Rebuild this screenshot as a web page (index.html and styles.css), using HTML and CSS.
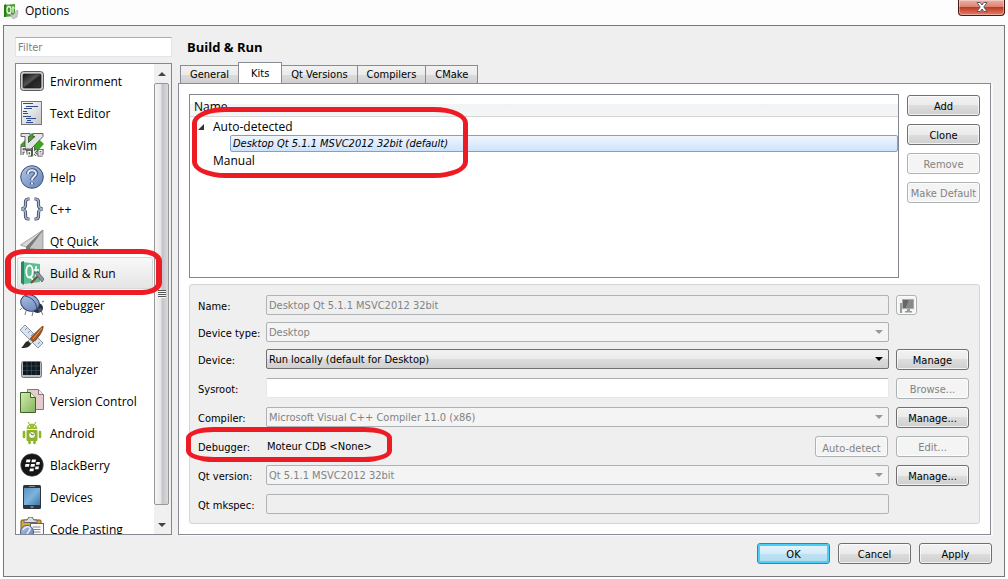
FILE: index.html
```html
<!DOCTYPE html>
<html lang="en">
<head>
    <meta charset="UTF-8">
    <meta name="viewport" content="width=device-width, initial-scale=1.0">
    <title>Options</title>
    <link rel="stylesheet" href="styles.css">
</head>
<body>
    <svg class="defs" width="0" height="0" aria-hidden="true">
        <defs>
            <linearGradient id="dark" x1="0" y1="0" x2="1" y2="1"><stop offset="0" stop-color="#111"/><stop offset=".45" stop-color="#555"/><stop offset=".55" stop-color="#222"/><stop offset="1" stop-color="#333"/></linearGradient>
            <linearGradient id="silver" x1="0" y1="0" x2="1" y2="1"><stop offset="0" stop-color="#fff"/><stop offset="1" stop-color="#c4c6c8"/></linearGradient>
            <linearGradient id="blue" x1="0" y1="0" x2="1" y2="1"><stop offset="0" stop-color="#b4c6e4"/><stop offset="1" stop-color="#6482b8"/></linearGradient>
            <linearGradient id="green" x1="0" y1="0" x2="1" y2="1"><stop offset="0" stop-color="#d4ecae"/><stop offset="1" stop-color="#82b45c"/></linearGradient>
            <linearGradient id="screen" x1="0" y1="0" x2="1" y2="1"><stop offset="0" stop-color="#5a94c4"/><stop offset=".5" stop-color="#7db4dc"/><stop offset="1" stop-color="#3a78ac"/></linearGradient>
        </defs>
    </svg>

    <div class="titlebar">
        <svg class="app-icon" viewBox="0 0 16 16">
            <path d="M1 2l11-1v12L1 14z" fill="#45a02c"/>
            <path d="M1 2l2-1v13l-2 0z" fill="#2b7a18"/>
            <ellipse cx="6" cy="7" rx="2" ry="3.5" fill="none" stroke="#e8f6e0" stroke-width="1.3"/>
            <path d="M6 9l2 3M10 3v7M9 5h3" stroke="#e8f6e0" stroke-width="1.2"/>
            <path d="M7 11l3 1 4-5 1 1-1 6-4 2z" fill="#c8cccc" stroke="#8c9292" stroke-width=".5"/>
        </svg>
        <span class="title">Options</span>
        <button class="close" aria-label="Close">
            <svg viewBox="0 0 12 10"><path d="M1 .5h3.2L6 3 7.8.5H11L7.8 5 11 9.5H7.8L6 7 4.2 9.500H1L4.200 5z" fill="#fff" stroke="#5a5a66"/></svg>
        </button>
    </div>

    <div class="dialog">
        <div class="content">
            <div class="sidebar">
                <input class="filter" type="text" placeholder="Filter" aria-label="Filter">
                <div class="list">
                    <ul class="items">
                        <li>
                            <svg viewBox="0 0 24 24"><rect x=".5" y="2.5" width="23" height="19" rx="3" fill="#c8c8c8" stroke="#5c5c5c"/><rect x="3" y="5" width="18" height="14" rx="1" fill="url(#dark)" stroke="#111" stroke-width=".6"/></svg>
                            Environment
                        </li>
                        <li>
                            <svg viewBox="0 0 24 24"><rect x="1.5" y=".5" width="20" height="23" fill="url(#silver)" stroke="#777"/><path d="M3 2.500h10M6 5.500h12M4 7.500h8M3 10.500h4M3 12.500h5M3 15.500h8M6 17.500h10M7 19.500h4M6 21.500h7" stroke="#2c4c8c"/></svg>
                            Text Editor
                        </li>
                        <li>
                            <svg viewBox="0 0 24 24"><path d="M12 0l12 11-12 13L0 12z" fill="#3aa51e"/><path d="M1 .5h9v3H8.500v6L15 3.500h-2v-3h10v3L11 16H5V3.500H1z" fill="#e4e6e4" stroke="#444" stroke-width=".8"/><path d="M2 22v-7.500h3.500M2 18h3M8 21.500v-3h2.500V22H8M13.500 14v8M16.500 17l-2.500 2.500 2.500 2.500M22.500 22h-3.500v-4.500h3v2.500h-3" fill="none" stroke="#3c3c3c" stroke-width="3"/><path d="M2 22v-7.500h3.500M2 18h3M8 21.500v-3h2.500V22H8M13.500 14v8M16.500 17l-2.500 2.500 2.500 2.500M22.500 22h-3.500v-4.500h3v2.500h-3" fill="none" stroke="#f4f4f4" stroke-width="1.300"/></svg>
                            FakeVim
                        </li>
                        <li>
                            <svg viewBox="0 0 24 24"><circle cx="12" cy="12" r="11.300" fill="url(#blue)" stroke="#3c5078"/><path d="M8 9c0-5 8-5 8-.5 0 3-4 3-4 6.500M12 17.500v2" fill="none" stroke="#3e537c" stroke-width="4"/><path d="M8 9c0-5 8-5 8-.5 0 3-4 3-4 6.500M12 17.500v2" fill="none" stroke="#e4eaf6" stroke-width="2"/></svg>
                            Help
                        </li>
                        <li>
                            <svg viewBox="0 0 24 24"><path d="M9.500 2H8C5 2 5.500 5 5.500 8S4 11.500 1.500 12C4 12.500 5.500 13 5.500 16S5 22 8 22h1.500M14.500 2H16c3 0 2.500 3 2.500 6s1.500 3.500 4 4c-2.500.5-4 1-4 4s.5 6-2.500 6h-1.500" fill="none" stroke="#3c4860" stroke-width="3.200"/><path d="M9.500 2H8C5 2 5.500 5 5.500 8S4 11.500 1.500 12C4 12.500 5.500 13 5.500 16S5 22 8 22h1.500M14.500 2H16c3 0 2.500 3 2.500 6s1.500 3.500 4 4c-2.500.5-4 1-4 4s.5 6-2.500 6h-1.500" fill="none" stroke="#a9b8d0" stroke-width="1.500"/></svg>
                            C++
                        </li>
                        <li>
                            <svg viewBox="0 0 24 24"><path d="M23 1L.5 16l5.500 2z" fill="#d8d8d8" stroke="#777" stroke-width=".6"/><path d="M23 1L6 18v6l4-4z" fill="#777"/><path d="M23 1L9.500 19 23 22z" fill="#c4c4c4" stroke="#777" stroke-width=".6"/></svg>
                            Qt Quick
                        </li>
                        <li class="selected">
                            <svg viewBox="0 0 24 24"><path d="M2 1l18 2v18L4 23l-3-1z" fill="#5cbd92"/><path d="M1 1l3-1v24l-3-2z" fill="#268a60"/><ellipse cx="9.500" cy="10.500" rx="3.200" ry="6" fill="none" stroke="#fff" stroke-width="1.800"/><path d="M10 15l3 4M16 5v9q0 2 2 2M14 9h5" fill="none" stroke="#fff" stroke-width="1.600"/><path d="M11 22l8-8" stroke="#754c3c" stroke-width="2"/><path d="M14 11l4 0 6 7-2 3-4-5z" fill="#8d949c" stroke="#444c58" stroke-width=".7"/></svg>
                            Build &amp; Run
                        </li>
                        <li>
                            <svg viewBox="0 0 24 24"><path d="M2 15l-2 2M6 18l-1 4M13 19l-1 4M21 18l2 4M22 9l2-1" stroke="#777" stroke-width="1"/><ellipse cx="17.500" cy="15" rx="5.500" ry="5" fill="#26303f"/><ellipse cx="10" cy="10" rx="9.500" ry="8" transform="rotate(25 10 10)" fill="url(#blue)" stroke="#34456b"/><path d="M5 3c6 1 11 5 12 13" fill="none" stroke="#34456b"/><circle cx="20" cy="17" r="2" fill="#4e5664"/></svg>
                            Debugger
                        </li>
                        <li>
                            <svg viewBox="0 0 24 24"><path d="M0 5l5-5 18 18-5 5z" fill="#d9e2ee" stroke="#8796ab"/><path d="M7 3L5 5M10 6L8 8M13 9l-2 2M17 14l-2 2M20 17l-2 2" stroke="#8796ab"/><path d="M23 1c1 3-4 12-10 16l-3-3C14 9 20 3 23 1z" fill="#a9541c" stroke="#5e2c0b" stroke-width=".7"/><path d="M22 3l-9 11" stroke="#e8a060"/><path d="M10 14l3 3-2 2-3-3z" fill="#d8d8c8" stroke="#555" stroke-width=".5"/><path d="M8 16l3 3c-2 4-6 4-10 4 3-2 3-6 7-7z" fill="#2e2a28"/></svg>
                            Designer
                        </li>
                        <li>
                            <svg viewBox="0 0 24 24"><rect x="1.500" y="4.500" width="20" height="16" rx="2" fill="#bcbcbc" stroke="#777"/><rect x="3" y="5" width="17" height="13" fill="#111820"/><path d="M3 9h17M3 13.500h17M7 5v13M11.500 5v13M16 5v13" stroke="#3a5d68" stroke-width=".6"/></svg>
                            Analyzer
                        </li>
                        <li>
                            <svg viewBox="0 0 24 24"><path d="M7.500.5h11l5 5v15h-16z" fill="#e4cccc" stroke="#8c7474"/><path d="M18.500.5v5h5" fill="#f6e8e8" stroke="#8c7474"/><path d="M.5 3.500h10l5 5v15H.5z" fill="url(#green)" stroke="#3d6126"/><path d="M10.500 3.500v5h5" fill="#e8f6d8" stroke="#3d6126"/></svg>
                            Version Control
                        </li>
                        <li>
                            <svg viewBox="0 0 24 24"><path d="M8 1l2 3M16 1l-2 3" stroke="#8eb026"/><path d="M6.500 8C7 1 17 1 17.500 8z" fill="#9bc02e"/><rect x="6.500" y="9" width="11" height="11" rx="1" fill="#8eb527"/><path d="M4 11v5M20 11v5M9.500 19v3M14.500 19v3" stroke="#8eb527" stroke-width="2.600" stroke-linecap="round"/><circle cx="9.500" cy="5.500" r=".8" fill="#fff"/><circle cx="14.500" cy="5.500" r=".8" fill="#fff"/><circle cx="12" cy="14" r="3.500" fill="#f4f6ea" stroke="#64831a" stroke-width=".7"/><path d="M10.500 12l1.500 2 2-1" fill="none" stroke="#64831a"/></svg>
                            Android
                        </li>
                        <li>
                            <svg viewBox="0 0 24 24"><circle cx="12" cy="12" r="11.300" fill="#161616" stroke="#555" stroke-width=".6"/><path d="M6.500 6.500h4l-.6 2.800h-4zM12 6.500h4l-.6 2.800h-4zM5.500 11h4l-.6 2.800h-4zM11 11h4l-.6 2.800h-4zM16.500 9h3.500l-.6 2.800h-3.500zM15.500 13.500H19l-.6 2.800H15zM10 15.500h4l-.6 2.800h-4z" fill="#fff"/></svg>
                            BlackBerry
                        </li>
                        <li>
                            <svg viewBox="0 0 24 24"><rect x="3" y="0" width="18" height="24" rx="1.500" fill="#30353b"/><rect x="4" y="3" width="16" height="17" fill="url(#screen)"/><path d="M9 1.500h6" stroke="#888"/><path d="M10.500 22h3" stroke="#999" stroke-width="1.500"/></svg>
                            Devices
                        </li>
                        <li>
                            <svg viewBox="0 0 24 24"><rect x="1" y="3" width="20" height="20" rx="1" fill="#d8a83a" stroke="#76551a"/><path d="M4 5.500h13V3h-3L12 0H9L7 3H4z" fill="#ddd" stroke="#666"/><rect x="10.500" y="6.500" width="13" height="17" fill="#fafafa" stroke="#666"/><path d="M12.500 10h8M12.500 12.500h8M12.500 15h8" stroke="#888"/><circle cx="7" cy="15" r="6.500" fill="url(#blue)" stroke="#4b618c"/><path d="M3 13c2-4 6-4 7-2s-3 4-3 7" fill="none" stroke="#e8eefa" stroke-width="1.500"/></svg>
                            Code Pasting
                        </li>
                    </ul>
                    <div class="scrollbar">
                        <span class="arrow arrow-up"></span>
                        <div class="thumb"><span class="grip"></span></div>
                        <span class="arrow arrow-down"></span>
                    </div>
                </div>
                <div class="mark mark-build"></div>
            </div>

            <div class="main">
                <h1>Build &amp; Run</h1>
                <div class="tabs" role="tablist">
                    <button class="tab" role="tab">General</button>
                    <button class="tab active" role="tab" aria-selected="true">Kits</button>
                    <button class="tab" role="tab">Qt Versions</button>
                    <button class="tab" role="tab">Compilers</button>
                    <button class="tab" role="tab">CMake</button>
                </div>
                <div class="panel">
                    <div class="kits">
                        <div class="tree">
                            <div class="tree-header">Name</div>
                            <ul class="tree-body">
                                <li class="node open">Auto-detected</li>
                                <li class="leaf">Desktop Qt 5.1.1 MSVC2012 32bit (default)</li>
                                <li class="node">Manual</li>
                            </ul>
                            <div class="mark mark-kit"></div>
                        </div>
                        <div class="kit-buttons">
                            <button class="btn">Add</button>
                            <button class="btn">Clone</button>
                            <button class="btn" disabled>Remove</button>
                            <button class="btn" disabled>Make Default</button>
                        </div>
                    </div>

                    <form class="details">
                        <label for="name">Name:</label>
                        <input id="name" class="field" type="text" value="Desktop Qt 5.1.1 MSVC2012 32bit" disabled>
                        <button type="button" class="btn icon-btn" aria-label="Kit icon" disabled>
                            <svg viewBox="0 0 16 16"><path d="M1 5h2v10H1z" fill="#999"/><rect x="3" y="1" width="12" height="10" fill="#aaa"/><path d="M4 2h6L7 10H4z" fill="#666"/><path d="M10 2h4v8H7z" fill="#888"/><path d="M8 11h3v2h2v1.500H6V13h2z" fill="#999"/></svg>
                        </button>

                        <label for="type">Device type:</label>
                        <div class="combo disabled"><select id="type" disabled><option>Desktop</option></select></div>

                        <label for="device">Device:</label>
                        <div class="combo"><select id="device"><option>Run locally (default for Desktop)</option></select></div>
                        <button type="button" class="btn">Manage</button>

                        <label for="sysroot">Sysroot:</label>
                        <input id="sysroot" class="field" type="text">
                        <button type="button" class="btn" disabled>Browse...</button>

                        <label for="compiler">Compiler:</label>
                        <div class="combo disabled"><select id="compiler" disabled><option>Microsoft Visual C++ Compiler 11.0 (x86)</option></select></div>
                        <button type="button" class="btn">Manage...</button>

                        <span class="label">Debugger:<span class="mark mark-debugger"></span></span>
                        <div class="debugger">
                            <span>Moteur CDB &lt;None&gt;</span>
                            <button type="button" class="btn" disabled>Auto-detect</button>
                        </div>
                        <button type="button" class="btn" disabled>Edit...</button>

                        <label for="version">Qt version:</label>
                        <div class="combo disabled"><select id="version" disabled><option>Qt 5.1.1 MSVC2012 32bit</option></select></div>
                        <button type="button" class="btn">Manage...</button>

                        <label for="mkspec">Qt mkspec:</label>
                        <input id="mkspec" class="field" type="text" disabled>
                    </form>
                </div>
            </div>
        </div>

        <div class="footer">
            <button class="btn default">OK</button>
            <button class="btn">Cancel</button>
            <button class="btn">Apply</button>
        </div>
    </div>
</body>
</html>
```
FILE: styles.css
```css
* {
    box-sizing: border-box;
}
body {
    margin: 0;
    background-color: #fdfdfd;
    color: #000;
    font-family: 'DejaVu Sans Condensed', 'DejaVu Sans', sans-serif;
    font-size: 11px;
}
button, input, select {
    font: inherit;
    color: inherit;
}
ul {
    list-style: none;
    margin: 0;
    padding: 0;
}
.defs {
    position: absolute;
}

/* title bar */
.titlebar {
    display: flex;
    height: 25px;
    padding: 0 3px;
    font-family: 'Open Sans', 'Noto Sans', sans-serif;
    font-size: 12px;
}
.app-icon {
    width: 16px;
    height: 16px;
    margin: 3px 6px 0 0;
}
.title {
    flex: 1;
    line-height: 22px;
}
.close {
    width: 47px;
    height: 16px;
    padding: 0;
    border: 1px solid #4c1a16;
    border-top: none;
    border-radius: 0 0 4px 4px;
    background: linear-gradient(#eeb0a4, #dc8474 45%, #c03a22 50%, #e0806a);
    box-shadow: inset 0 0 0 1px rgba(255, 255, 255, 0.35);
}
.close svg {
    display: block;
    width: 12px;
    height: 10px;
    margin: 0 auto 2px;
}

/* dialog */
.dialog {
    margin: 0 3px 2px;
    padding: 11px 12px 12px 11px;
    border: 1px solid #777;
    background-color: #efefef;
}
.content {
    display: flex;
    gap: 6px;
    padding-right: 1px;
}
.sidebar {
    position: relative;
    display: flex;
    flex-direction: column;
    flex: none;
    gap: 6px;
    width: 157px;
}
.filter {
    width: 100%;
    height: 20px;
    padding: 1px 2px 0;
    border: 1px solid #e3e3ec;
    border-top-color: #abadb3;
    background-color: #fff;
}
.filter::placeholder {
    color: #808080;
}
.list {
    display: flex;
    flex: 1 1 0;
    min-height: 0;
    overflow: hidden;
    border: 1px solid #828790;
    background-color: #fff;
}
.items {
    flex: 1;
    padding: 1px;
    font-family: 'Open Sans', 'Noto Sans', sans-serif;
    font-size: 12px;
}
.items li {
    display: flex;
    align-items: center;
    gap: 6px;
    height: 32px;
    padding-left: 2px;
    border: 1px solid transparent;
    white-space: nowrap;
}
.items svg {
    flex: none;
    width: 24px;
    height: 24px;
}
.items .selected {
    border-color: #d9d9d9;
    border-radius: 3px;
    background: linear-gradient(#f8f8f8, #e5e5e5);
}
.scrollbar {
    display: flex;
    flex-direction: column;
    width: 17px;
    padding: 0 2px 0 0;
    background-color: #f0f0f0;
}
.arrow {
    position: relative;
    height: 19px;
}
.arrow-down {
    height: 29px;
}
.arrow::after {
    content: '';
    position: absolute;
    left: 4px;
    top: 8px;
    border: 4px solid transparent;
    border-top: none;
    border-bottom-color: #444;
}
.arrow-down::after {
    top: 18px;
    border-top: 4px solid #444;
    border-bottom: none;
}
.thumb {
    display: flex;
    flex: 1;
    align-items: center;
    justify-content: center;
    border: 1px solid #979797;
    border-radius: 2px;
    background: linear-gradient(to right, #f5f5f5, #e6e6e9 45%, #c4c4c8 55%, #dadadc);
}
.grip {
    width: 8px;
    height: 8px;
    background: repeating-linear-gradient(#555 0 1px, #f6f6f6 1px 2px);
}

/* main column */
.main {
    flex: 1;
    min-width: 0;
    display: flex;
    flex-direction: column;
}
h1 {
    margin: 0 0 5px;
    padding-left: 9px;
    font-family: 'Open Sans', 'Noto Sans', sans-serif;
    font-size: 13px;
    line-height: 20px;
}
.tabs {
    display: flex;
    align-items: flex-end;
    height: 22px;
    padding-left: 2px;
    margin-bottom: -1px;
}
.tab {
    height: 18px;
    margin: 0 0 1px -1px;
    padding: 1px 9px 0;
    border: 1px solid #898c95;
    border-bottom: none;
    background: linear-gradient(#f2f2f2, #ebebeb 50%, #dcdcdc 50%, #d0d0d0);
    line-height: 16px;
}
.tab:first-child {
    margin-left: 0;
}
.tab.active {
    height: 22px;
    margin-bottom: 0;
    padding: 0 12px;
    background: #fff;
}
.panel {
    padding: 10px;
    border: 1px solid #898c95;
    background-color: #fff;
    box-shadow: 2px 1px #fafafa;
}
.kits {
    display: flex;
    gap: 8px;
    margin-bottom: 6px;
}
.tree {
    position: relative;
    flex: 1;
    min-height: 184px;
    border: 1px solid #828790;
    font-family: 'Open Sans', 'Noto Sans', sans-serif;
    font-size: 12px;
}
.tree-header {
    height: 22px;
    padding-left: 4px;
    border-bottom: 1px solid #d5d5d5;
    background: linear-gradient(#fff 45%, #f2f3f4 45%, #f4f5f6);
    line-height: 23px;
}
.tree-body {
    padding-top: 1px;
    line-height: 17px;
}
.node {
    position: relative;
    padding-left: 23px;
}
.open::before {
    content: '';
    position: absolute;
    left: 8px;
    top: 6px;
    border: 3px solid #333;
    border-top-color: transparent;
    border-left-color: transparent;
}
.leaf {
    margin-left: 40px;
    padding-left: 2px;
    border: 1px solid #7da2ce;
    border-radius: 2px;
    background: linear-gradient(#f0f6fe, #cde3fc);
    font-family: 'DejaVu Sans Condensed', 'DejaVu Sans', sans-serif;
    font-size: 11px;
    font-style: italic;
    line-height: 15px;
}
.kit-buttons {
    display: flex;
    flex-direction: column;
    gap: 8px;
    padding-top: 1px;
}

/* buttons */
.btn {
    width: 73px;
    height: 21px;
    padding: 1px 0 0;
    border: 1px solid #707070;
    border-radius: 3px;
    background: linear-gradient(#f2f2f2, #ebebeb 50%, #dddddd 50%, #cfcfcf);
    box-shadow: inset 0 0 0 1px rgba(255, 255, 255, 0.7);
    white-space: nowrap;
}
.btn:disabled {
    border-color: #adb2b5;
    background: #f4f4f4;
    color: #838383;
}
.btn.default {
    border-color: #3c7fb1;
    background: linear-gradient(#e6f4fb, #d4ecf8 50%, #bee2f5 50%, #b4d8ec);
    box-shadow: inset 0 0 0 2px #48d1f8;
}
.icon-btn {
    width: 21px;
    height: 20px;
}
.icon-btn svg {
    display: block;
    width: 16px;
    height: 16px;
    margin: 0 auto;
}

/* kit details */
.details {
    display: grid;
    grid-template-columns: 61px 1fr 73px;
    grid-template-rows: 20px 20px repeat(5, 22px) 20px;
    gap: 7px;
    align-items: start;
    padding: 10px 10px 9px 8px;
    border: 1px solid #d5d5d5;
    border-radius: 3px;
    background-color: #efefef;
}
.details label, .label {
    position: relative;
    grid-column: 1;
    line-height: 23px;
    white-space: nowrap;
}
.field {
    width: 100%;
    height: 20px;
    padding: 1px 2px 0;
    border: 1px solid #e3e9ef;
    border-top-color: #abadb3;
    border-radius: 2px;
    background-color: #fff;
}
.field:disabled {
    border-color: #afb4b7;
    background-color: #efefef;
    color: #838383;
}
.combo {
    position: relative;
    height: 20px;
}
.combo select {
    display: block;
    appearance: none;
    width: 100%;
    height: 20px;
    padding: 1px 20px 0 2px;
    border: 1px solid #707070;
    border-radius: 2px;
    background: linear-gradient(#f2f2f2, #ebebeb 50%, #dddddd 50%, #cfcfcf);
}
.combo::after {
    content: '';
    position: absolute;
    right: 6px;
    top: 8px;
    border: 4px solid transparent;
    border-top-color: #000;
    border-bottom: none;
    pointer-events: none;
}
.combo.disabled select {
    border-color: #adb2b5;
    background: #f4f4f4;
    color: #838383;
    opacity: 1;
}
.combo.disabled::after {
    border-top-color: #999;
}
.debugger {
    display: flex;
    justify-content: space-between;
    padding: 0 1px;
    line-height: 21px;
}

.footer {
    display: flex;
    justify-content: flex-end;
    gap: 8px;
    padding-top: 8px;
}

/* red highlight rings */
.mark {
    position: absolute;
    border: 5px solid #ed1c24;
    pointer-events: none;
}
.mark-build {
    left: -10px;
    top: 212px;
    width: 157px;
    height: 46px;
    border-width: 5px 6px;
    border-radius: 20px / 12px;
}
.mark-kit {
    left: 2px;
    top: 12px;
    width: 276px;
    height: 71px;
    border-radius: 34px / 16px;
}
.mark-debugger {
    left: -12px;
    top: -9px;
    width: 206px;
    height: 35px;
    border-radius: 28px / 11px;
}
```
